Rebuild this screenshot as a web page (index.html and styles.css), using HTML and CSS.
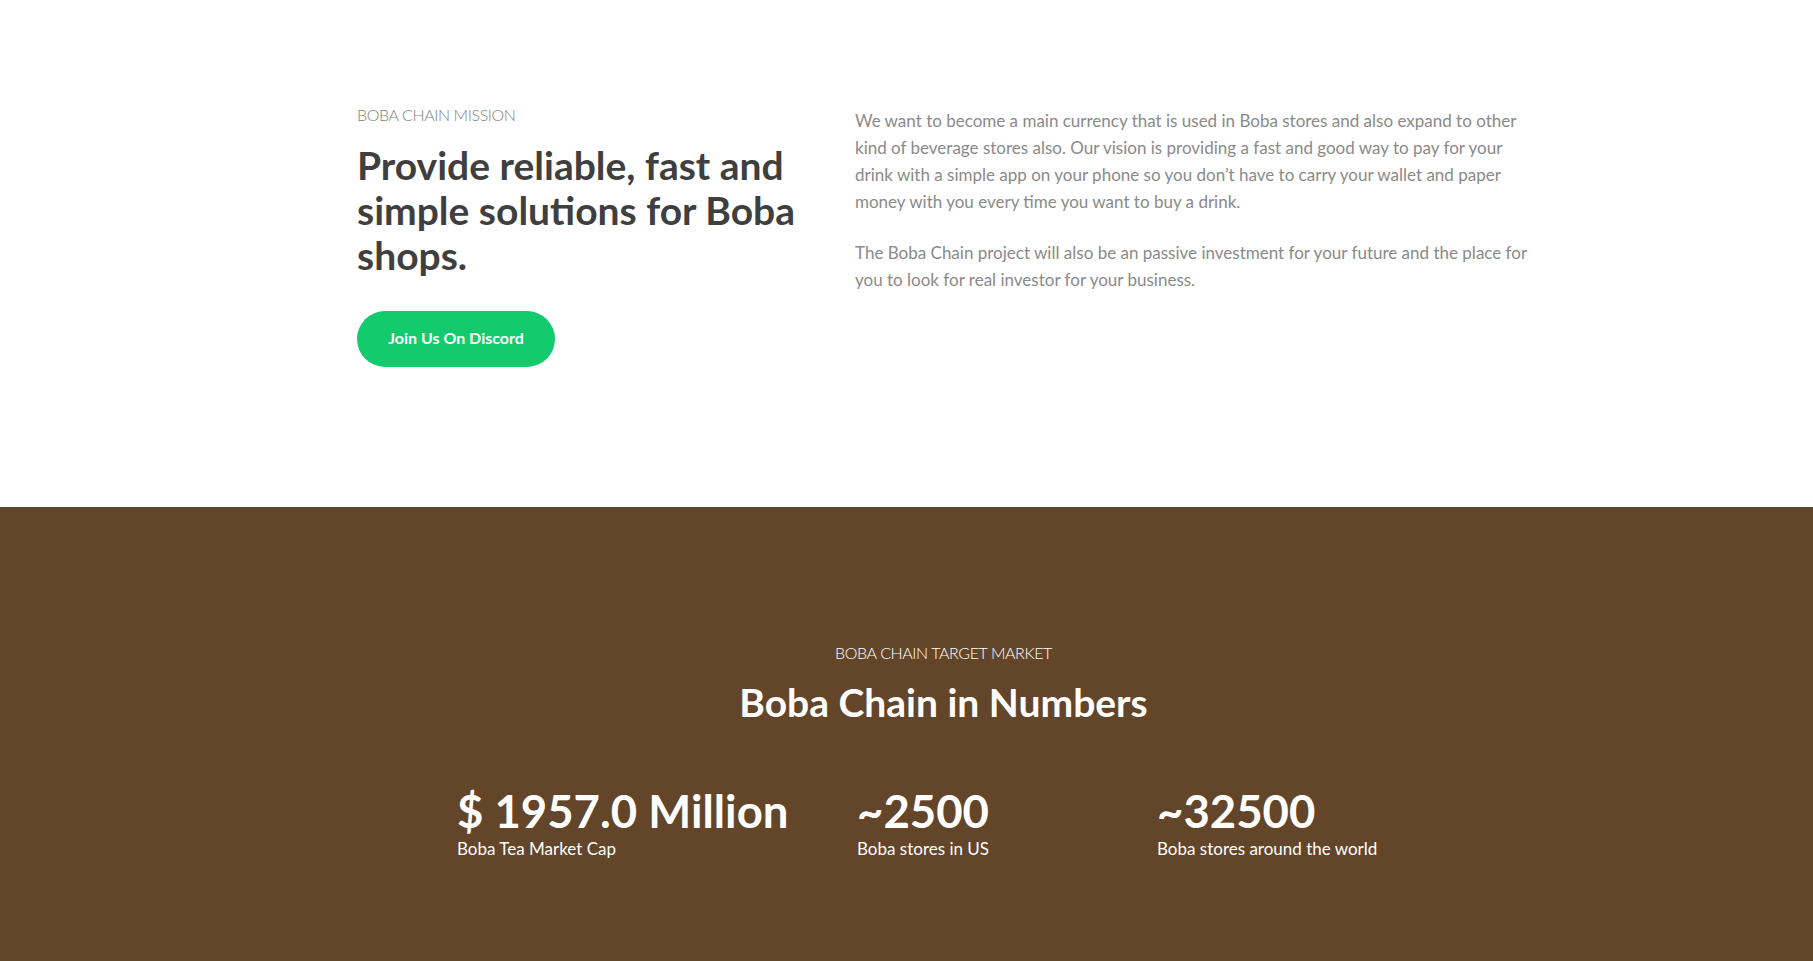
FILE: index.html
```html
<!DOCTYPE html>
<html lang="en">
<head>
<meta charset="utf-8">
<title>Boba Chain</title>
<link rel="stylesheet" href="styles.css">
</head>
<body>
<section class="mission">
  <div class="container mission-grid">
    <div class="mission-left">
      <p class="eyebrow">BOBA CHAIN MISSION</p>
      <h2 class="mission-title">Provide reliable, fast and simple solutions for Boba shops.</h2>
      <a class="btn-discord" href="#">Join Us On Discord</a>
    </div>
    <div class="mission-right">
      <p class="body-text">We want to become a main currency that is used in Boba stores and also expand to other kind of beverage stores also. Our vision is providing a fast and good way to pay for your drink with a simple app on your phone so you don’t have to carry your wallet and paper money with you every time you want to buy a drink.</p>
      <p class="body-text">The Boba Chain project will also be an passive investment for your future and the place for you to look for real investor for your business.</p>
    </div>
  </div>
</section>
<section class="numbers">
  <div class="container">
    <p class="eyebrow eyebrow-light">BOBA CHAIN TARGET MARKET</p>
    <h2 class="numbers-title">Boba Chain in Numbers</h2>
    <div class="stats">
      <div class="stat">
        <div class="stat-value">$ 1957.0 Million</div>
        <div class="stat-label">Boba Tea Market Cap</div>
      </div>
      <div class="stat">
        <div class="stat-value">~2500</div>
        <div class="stat-label">Boba stores in US</div>
      </div>
      <div class="stat">
        <div class="stat-value">~32500</div>
        <div class="stat-label">Boba stores around the world</div>
      </div>
    </div>
  </div>
</section>
</body>
</html>
```

FILE: styles.css
```css
* { box-sizing: border-box; }
html, body { margin: 0; padding: 0; }
body {
  font-family: Lato, "Open Sans", sans-serif;
  background: #ffffff;
  color: #404040;
}
p { margin: 0; }
h2 { margin: 0; }

.container {
  width: 1173px;
  margin-left: 357px;
}

.mission {
  height: 507px;
  padding-top: 102px;
}
.mission-grid {
  display: grid;
  grid-template-columns: 498px 1fr;
}

.eyebrow {
  font-family: Lato, sans-serif;
  font-weight: 300;
  font-size: 16px;
  line-height: 25.5px;
  letter-spacing: -0.4px;
  color: #808080;
}

.mission-title {
  margin-top: 15px;
  max-width: 470px;
  font-family: Lato, sans-serif;
  font-weight: 700;
  font-size: 39px;
  line-height: 45px;
  color: #3f3f3f;
}

.btn-discord {
  display: inline-flex;
  align-items: center;
  justify-content: center;
  margin-top: 33px;
  width: 198px;
  height: 56px;
  padding-bottom: 3px;
  border-radius: 28px;
  background: #13cb6d;
  color: #ffffff;
  font-family: Lato, sans-serif;
  font-weight: 700;
  font-size: 16px;
  text-decoration: none;
}

.mission-right {
  padding-top: 5px;
}
.body-text {
  font-family: Lato, sans-serif;
  font-weight: 400;
  font-size: 17px;
  line-height: 27px;
  color: #8a8a8a;
}
.body-text + .body-text {
  margin-top: 24px;
}

.numbers {
  background: #63452a;
  min-height: 454px;
  padding-top: 133px;
  color: #ffffff;
}
.eyebrow-light {
  color: #ffffff;
  text-align: center;
}
.numbers-title {
  margin-top: 12px;
  text-align: center;
  font-family: Lato, sans-serif;
  font-weight: 700;
  font-size: 39px;
  line-height: 48px;
  color: #ffffff;
}
.stats {
  margin-top: 60px;
  padding-left: 100px;
  display: grid;
  grid-template-columns: 400px 300px 1fr;
}
.stat-value {
  font-family: Lato, sans-serif;
  font-weight: 700;
  font-size: 45.5px;
  line-height: 50.6px;
  color: #ffffff;
}
.stat-label {
  font-family: Lato, sans-serif;
  font-weight: 400;
  font-size: 17px;
  line-height: 25.5px;
  color: #ffffff;
}
```
